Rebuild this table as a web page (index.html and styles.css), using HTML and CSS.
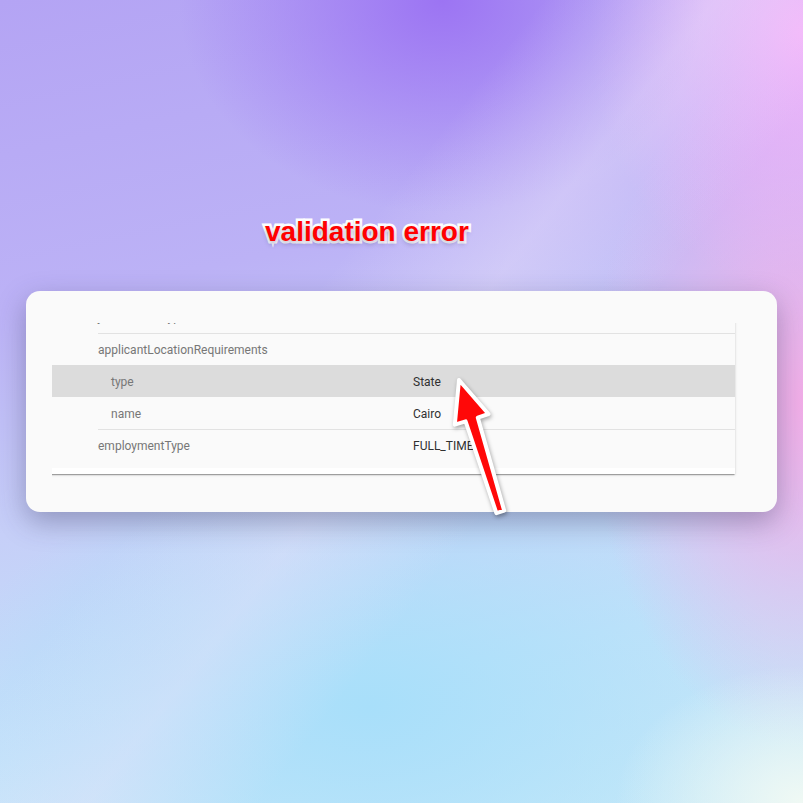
FILE: index.html
```html
<!DOCTYPE html>
<html lang="en">
<head>
    <meta charset="UTF-8">
    <meta name="viewport" content="width=device-width, initial-scale=1.0">
    <title>Validation error</title>
    <link rel="stylesheet" href="styles.css">
</head>
<body>
    <div class="stage">
        <h1 class="title">validation error</h1>

        <div class="card">
            <div class="viewport">
                <div class="panel">
                    <div class="table">
                        <div class="row">
                            <div class="cells">
                                <span class="key">jobLocationType</span>
                                <span class="value">TELECOMMUTE</span>
                            </div>
                        </div>
                        <div class="row">
                            <div class="cells">
                                <span class="key">applicantLocationRequirements</span>
                                <span class="value"></span>
                            </div>
                        </div>
                        <div class="row nested selected">
                            <div class="cells">
                                <span class="key">type</span>
                                <span class="value">State</span>
                            </div>
                        </div>
                        <div class="row nested">
                            <div class="cells">
                                <span class="key">name</span>
                                <span class="value">Cairo</span>
                            </div>
                        </div>
                        <div class="row">
                            <div class="cells">
                                <span class="key">employmentType</span>
                                <span class="value">FULL_TIME</span>
                            </div>
                        </div>
                    </div>
                </div>
            </div>
        </div>

        <!-- annotation arrow pointing at the invalid value -->
        <svg class="arrow" width="80" height="170" viewBox="0 0 80 170">
            <polygon points="19,20 48.5,54 37.8,57.6 64.2,150.6 56.4,153.2 25.6,61.4 14.8,64.6"
                     fill="#ff0808" stroke="#ffffff" stroke-width="4" stroke-linejoin="round"/>
        </svg>
    </div>
</body>
</html>
```

FILE: styles.css
```css
html, body {
    margin: 0;
    height: 100%;
}
body {
    font-family: Roboto, 'Liberation Sans', sans-serif;
    overflow: hidden;
    background:
        radial-gradient(ellipse 30% 22% at 100% 100%, rgba(240, 249, 244, 1), rgba(240, 249, 244, 0) 78%),
        linear-gradient(128deg, rgba(236, 226, 250, 0) 38%, rgba(236, 226, 250, 0.4) 50%, rgba(236, 226, 250, 0) 62%),
        radial-gradient(ellipse 42% 34% at 55% 0%, rgba(156, 116, 243, 1), rgba(156, 116, 243, 0) 78%),
        radial-gradient(ellipse 34% 42% at 100% 4%, rgba(244, 182, 250, 1), rgba(244, 182, 250, 0) 78%),
        radial-gradient(ellipse 34% 55% at 100% 50%, rgba(242, 174, 232, 1), rgba(242, 174, 232, 0) 78%),
        radial-gradient(ellipse 70% 42% at 46% 88%, rgba(168, 223, 250, 1), rgba(168, 223, 250, 0) 75%),
        linear-gradient(168deg, #b4a4f4 0%, #bcb2f6 32%, #c6cff8 55%, #c2e2fa 78%, #c8eaf8 100%);
}
.stage {
    position: relative;
    height: 803px;
    padding: 216px 26px 0;
    box-sizing: border-box;
}
.title {
    margin: 0 0 43px 239px;
    font-family: 'Liberation Sans', Arial, sans-serif;
    font-size: 28px;
    line-height: 32px;
    font-weight: bold;
    color: #ff0000;
    -webkit-text-stroke: 5px #ffffff;
    paint-order: stroke fill;
    text-shadow: 0 3px 5px rgba(40, 30, 90, 0.35);
}
.card {
    width: 751px;
    height: 221px;
    box-sizing: border-box;
    padding: 32px 38px 0 26px;
    background: #fafafa;
    border-radius: 14px;
    box-shadow: 0 10px 28px rgba(50, 50, 90, 0.36);
}
.viewport {
    overflow: hidden;
    padding: 0 4px 6px 0;
}
.panel {
    margin: -22px 0 0 -20px;
    padding-bottom: 6px;
    background: #ffffff;
    box-shadow: 0 2px 1px -1px rgba(0, 0, 0, 0.2), 0 1px 1px rgba(0, 0, 0, 0.14), 0 1px 3px rgba(0, 0, 0, 0.12);
}
.table {
    background: #fafafa;
    padding-bottom: 7px;
}
.row {
    height: 32px;
}
.row.selected {
    background: #dcdcdc;
}
.cells {
    height: 100%;
    margin-left: 66px;
    display: grid;
    grid-template-columns: 315px 1fr;
    align-items: center;
    box-sizing: border-box;
    border-top: 1px solid #e2e2e2;
    font-size: 12px;
}
.row:first-child .cells {
    border-top-color: transparent;
    padding-bottom: 2px;
}
.row.nested .cells {
    border-top-color: transparent;
}
.nested .key {
    padding-left: 13px;
}
.key {
    color: #777777;
}
.value {
    color: #303030;
}
.arrow {
    position: absolute;
    left: 440px;
    top: 360px;
    filter: drop-shadow(1px 2px 2px rgba(0, 0, 0, 0.35));
}
```
